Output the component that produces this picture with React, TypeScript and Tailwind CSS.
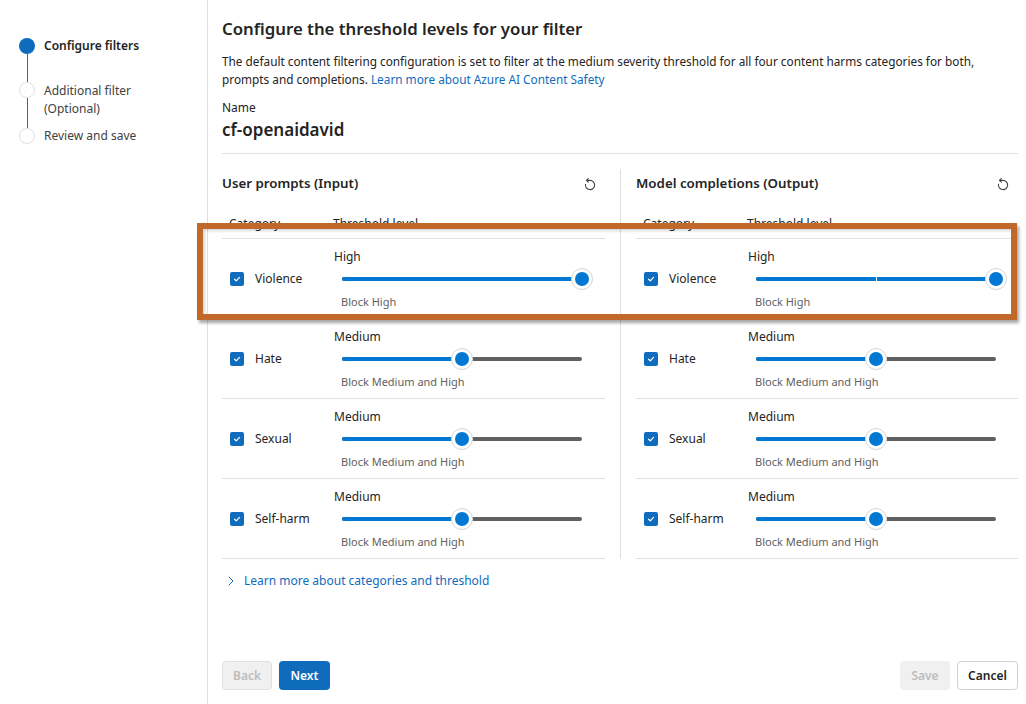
import React from "react";

const font = { fontFamily: '"Segoe UI", "Noto Sans", sans-serif' };

const steps = [
  { label: ["Configure filters"], active: true, pad: "pb-[28px]" },
  { label: ["Additional filter", "(Optional)"], active: false, pad: "pb-[10px]" },
  { label: ["Review and save"], active: false, pad: "" },
];

const rows = [
  { name: "Violence", level: "High", block: "Block High", value: 1 },
  { name: "Hate", level: "Medium", block: "Block Medium and High", value: 0.5 },
  { name: "Sexual", level: "Medium", block: "Block Medium and High", value: 0.5 },
  { name: "Self-harm", level: "Medium", block: "Block Medium and High", value: 0.5 },
];

function ResetIcon() {
  return (
    <svg width="16" height="16" viewBox="0 0 16 16" fill="none" stroke="#424242" strokeWidth="1.1" strokeLinecap="round" strokeLinejoin="round">
      <path d="M4.6 4.4 H8 A4.6 4.6 0 1 1 3.5 8.3" />
      <path d="M6.3 2.6 L4.5 4.4 L6.3 6.2" />
    </svg>
  );
}

function Checkbox() {
  return (
    <div className="w-[14px] h-[14px] rounded-[2px] bg-[#0f6cbd] flex items-center justify-center shrink-0">
      <svg width="10" height="10" viewBox="0 0 10 10" fill="none" stroke="white" strokeWidth="1.2" strokeLinecap="round" strokeLinejoin="round">
        <path d="M2.6 5.2 L4.3 6.8 L7.5 3.4" />
      </svg>
    </div>
  );
}

function Slider({ value, tick }: { value: number; tick?: boolean }) {
  return (
    <div className="relative w-[240px] h-5 ml-2">
      <div className="absolute left-0 right-0 top-[8px] h-[4px] rounded-full bg-[#616161]" />
      <div className="absolute left-0 top-[8px] h-[4px] rounded-full bg-[#0078d4]" style={{ width: `${value * 100}%` }} />
      {tick && <div className="absolute left-[120px] top-[8px] h-[4px] w-[1px] bg-white" />}
      <div
        className="absolute top-[-1px] w-[22px] h-[22px] -ml-[11px] rounded-full bg-white border border-[#d6d6d6] flex items-center justify-center"
        style={{ left: `${value * 100}%` }}
      >
        <div className="w-[14px] h-[14px] rounded-full bg-[#0078d4]" />
      </div>
    </div>
  );
}

function Column({ title, right }: { title: string; right?: boolean }) {
  return (
    <div className={right ? "flex-1 pl-[15px]" : "w-[399px] pr-[15px] border-r border-[#e0e0e0]"}>
      <div className="h-[30px] flex items-center justify-between pr-[7px]">
        <span className="text-[13.3px] font-semibold text-[#242424]">{title}</span>
        <ResetIcon />
      </div>
      <div className="h-10 pt-[17px] flex text-[12px] leading-4 text-[#242424] border-b border-[#e0e0e0]">
        <span className="w-[111px] pl-[7px]">Category</span>
        <span>Threshold level</span>
      </div>
      {rows.map((r, i) => (
        <div key={r.name} className="h-20 flex border-b border-[#e0e0e0]">
          <div className="w-[112px] flex items-center gap-[11px] pl-2">
            <Checkbox />
            <span className="text-[12px] text-[#242424]">{r.name}</span>
          </div>
          <div className="flex flex-col">
            <span className="mt-[10px] text-[12px] leading-4 text-[#242424]">{r.level}</span>
            <div className="mt-[4px]">
              <Slider value={r.value} tick={right && i === 0} />
            </div>
            <span className="mt-[5px] ml-[7px] text-[11px] leading-4 text-[#616161]">{r.block}</span>
          </div>
        </div>
      ))}
    </div>
  );
}

export default function App() {
  return (
    <div className="relative w-[1026px] h-[704px] bg-white flex overflow-hidden" style={font}>
      {/* STEPS */}
      <div className="w-[208px] h-full border-r border-[#e0e0e0] pl-[19px] pt-[38px]">
        {steps.map((s, i) => (
          <div key={i} className="flex gap-[9px]">
            <div className="flex flex-col items-center w-4">
              <div
                className={`w-4 h-4 rounded-full shrink-0 ${
                  s.active ? "bg-[#0f6cbd]" : "bg-white border border-[#e0e0e0]"
                }`}
              />
              {i < steps.length - 1 && <div className="w-px flex-1 bg-[#616161]" />}
            </div>
            <div className={`text-[12px] ${s.pad}`}>
              {s.label.map((l) => (
                <div
                  key={l}
                  className={`${s.label.length > 1 ? "leading-[18px]" : "leading-4"} ${
                    s.active ? "font-semibold text-[#242424]" : "text-[#424242]"
                  }`}
                >
                  {l}
                </div>
              ))}
            </div>
          </div>
        ))}
      </div>

      {/* MAIN */}
      <div className="flex-1 h-full flex flex-col pl-[14px] pr-[8px]">
        <h1 className="mt-[17px] text-[16.8px] leading-6 font-semibold text-[#242424]">
          Configure the threshold levels for your filter
        </h1>
        <p className="mt-[11px] text-[11.8px] leading-[18px] text-[#242424]">
          The default content filtering configuration is set to filter at the medium severity threshold for all four content harms categories for both,
          <br />
          prompts and completions. <span className="text-[#0f6cbd]">Learn more about Azure AI Content Safety</span>
        </p>
        <div className="mt-3 text-[12px] leading-4 text-[#242424]">Name</div>
        <div className="mt-[2px] pb-[11px] text-[17px] leading-6 font-semibold text-[#242424] border-b border-[#e0e0e0]">
          cf-openaidavid
        </div>

        <div className="mt-[15px] flex">
          <Column title="User prompts (Input)" />
          <Column title="Model completions (Output)" right />
        </div>

        <div className="mt-[14px] flex items-center gap-[9px] pl-[5px] text-[12px] leading-4 text-[#0f6cbd]">
          <svg width="8" height="10" viewBox="0 0 8 10" fill="none" stroke="#0f6cbd" strokeWidth="1" strokeLinecap="round">
            <path d="M2 1 L6 5 L2 9" />
          </svg>
          Learn more about categories and threshold
        </div>

        <div className="mt-auto mb-[14px] flex items-center text-[12px]">
          <button className="w-[50px] h-[29px] rounded-[4px] bg-[#f0f0f0] border border-[#e0e0e0] text-[#bdbdbd] font-semibold">Back</button>
          <button className="ml-[7px] w-[51px] h-[29px] rounded-[4px] bg-[#0f6cbd] text-white font-semibold">Next</button>
          <div className="flex-1" />
          <button className="w-[50px] h-[29px] rounded-[4px] bg-[#f0f0f0] text-[#bdbdbd] font-semibold">Save</button>
          <button className="ml-[7px] w-[61px] h-[29px] rounded-[4px] bg-white border border-[#d1d1d1] text-[#242424] font-semibold">Cancel</button>
        </div>
      </div>

      {/* HIGHLIGHT */}
      <div className="absolute left-[197px] top-[223px] w-[820px] h-[97px] border-[6px] border-[#c0692a] shadow-[2px_3px_3px_rgba(0,0,0,0.35),inset_2px_2px_3px_rgba(0,0,0,0.15)]" />
    </div>
  );
}
